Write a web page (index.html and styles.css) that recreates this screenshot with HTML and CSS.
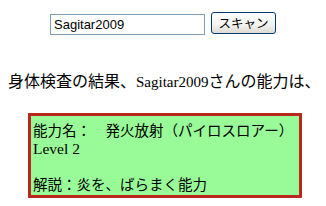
FILE: index.html
```html
<!DOCTYPE html>
<html lang="ja">

<head>
    <meta charset="UTF-8">
    <title>身体検査</title>
    <link rel="stylesheet" href="styles.css">
</head>

<body>
    <form class="scan-form">
        <input type="text" class="name-input" value="Sagitar2009">
        <button type="button" class="scan-button">スキャン</button>
    </form>

    <p class="result-line">身体検査の結果、<span class="latin">Sagitar2009</span>さんの能力は、</p>

    <div class="ability-box">
        <div class="ability-line">能力名：　発火放射（パイロスロアー）</div>
        <div class="ability-line level">Level 2</div>
        <div class="ability-line ability-desc">解説：炎を、ばらまく能力</div>
    </div>
</body>

</html>
```

FILE: styles.css
```css
body {
    margin: 0;
    padding: 0 8px;
    background: #ffffff;
    color: #000000;
    font-family: "Liberation Serif", "Noto Sans CJK JP", serif;
}

.scan-form {
    display: flex;
    justify-content: center;
    align-items: flex-start;
    gap: 6px;
    margin: 12px 0 0 0;
}

.name-input {
    box-sizing: border-box;
    width: 155px;
    height: 21px;
    margin: 2px 0 0 0;
    padding: 0 3px;
    border: 1px solid #7f9db9;
    font-family: "Liberation Sans", Arial, sans-serif;
    font-size: 13px;
    color: #000000;
    background: #ffffff;
    outline: none;
}

.scan-button {
    box-sizing: border-box;
    width: 65px;
    height: 22px;
    padding: 0;
    border: 1px solid #003c74;
    border-radius: 3px;
    background: linear-gradient(#ffffff, #f3f3ef 60%, #dcdad2);
    font-family: "Noto Sans CJK JP", sans-serif;
    font-size: 12.5px;
    line-height: 18px;
    color: #000000;
}

.result-line {
    margin: 37px 0 0 0;
    font-size: 16px;
    line-height: 20px;
    white-space: nowrap;
}

.latin {
    font-size: 15px;
}

.ability-box {
    width: 264px;
    margin: 21px 0 0 20px;
    padding: 6px 2px 1px 2px;
    border: 3px solid #b8281c;
    background: #98fb98;
    font-size: 14.5px;
    line-height: 18px;
}

.ability-line {
    white-space: nowrap;
}

.level {
    font-size: 15.5px;
}

.ability-desc {
    margin-top: 18px;
}
```
